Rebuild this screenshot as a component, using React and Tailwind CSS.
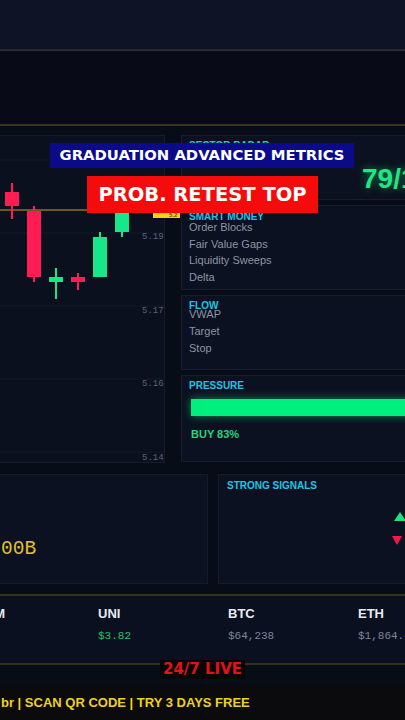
import React from "react";

// candle geometry in chart-local pixels (y grows downward)
const candles = [
  { x: 5, top: 56, bottom: 70, high: 47, low: 83, up: false },
  { x: 27, top: 75, bottom: 141, high: 70, low: 146, up: false },
  { x: 49, top: 141, bottom: 146, high: 132, low: 163, up: true },
  { x: 71, top: 141, bottom: 146, high: 137, low: 154, up: false },
  { x: 93, top: 101, bottom: 141, high: 96, low: 141, up: true },
  { x: 115, top: 62, bottom: 96, high: 55, low: 101, up: true },
];

const priceTicks = [
  { label: "5.19", y: 103 },
  { label: "5.17", y: 177 },
  { label: "5.16", y: 250 },
  { label: "5.14", y: 324 },
];

const tickers = [
  { sym: "ATOM", price: "$8.4", up: true },
  { sym: "UNI", price: "$3.82", up: true },
  { sym: "BTC", price: "$64,238", up: false },
  { sym: "ETH", price: "$1,864.40", up: false },
];

function ChartPanel() {
  return (
    <div className="relative w-[165px] h-[328px] shrink-0 bg-[#0b101e] border-y border-r border-[#151c2b]">
      <svg width="164" height="326" className="block">
        {[24, 97, 170, 243, 316].map((y) => (
          <line key={y} x1="0" x2="164" y1={y} y2={y} stroke="#121929" strokeWidth="1" />
        ))}
        <line x1="0" x2="164" y1="74" y2="74" stroke="#c9a227" strokeWidth="1.2" />
        {candles.map((c) => {
          const color = c.up ? "#18e68a" : "#ff1c52";
          return (
            <g key={c.x}>
              <rect x={c.x + 6} y={c.high} width="2" height={c.low - c.high} fill={color} />
              <rect x={c.x} y={c.top} width="14" height={c.bottom - c.top} fill={color} />
            </g>
          );
        })}
        {priceTicks.map((t) => (
          <text
            key={t.label}
            x="142"
            y={t.y}
            fill="#5a6477"
            fontSize="9"
            fontFamily="Liberation Mono, monospace"
          >
            {t.label}
          </text>
        ))}
      </svg>
      {/* current price tag */}
      <div className="absolute left-[153px] top-[77px] w-[27px] h-[5px] bg-[#f3d512] overflow-hidden">
        <span className="block pl-[16px] text-[6px] leading-[5px] font-bold text-[#5c4d00]">5.2</span>
      </div>
    </div>
  );
}

function Panel({ className, children }) {
  return (
    <div className={`bg-[#0b1120] border border-[#161d2c] shrink-0 ${className}`}>
      {children}
    </div>
  );
}

function Label({ children, className = "" }) {
  return (
    <div className={`text-[10px] leading-[10px] font-bold text-[#1fc4e6] ${className}`}>
      {children}
    </div>
  );
}

export default function App() {
  return (
    <div className="relative w-[405px] h-[720px] overflow-hidden bg-[#080c17] flex flex-col font-['Liberation_Sans',Arial,sans-serif]">
      <div className="h-[51px] shrink-0 bg-[#0e1425] border-b-2 border-[#282d35]" />
      <div className="h-[75px] shrink-0 bg-[#080b17] border-b-2 border-[#37361c]" />

      {/* chart + analytics column */}
      <div className="h-[340px] shrink-0 flex gap-[16px] pt-[9px]">
        <ChartPanel />
        <div className="w-[240px] shrink-0 flex flex-col gap-[5px]">
          <Panel className="h-[65px] pl-[7px] pt-[5px]">
            <Label>SECTOR RADAR</Label>
            <div className="mt-[14px] pl-[173px] text-[28px] leading-[28px] font-bold text-[#1de883] whitespace-nowrap [text-shadow:0_0_8px_rgba(29,232,131,0.55)]">
              79/100
            </div>
          </Panel>

          <Panel className="h-[85px] pl-[7px] pt-[6px]">
            <Label>SMART MONEY</Label>
            <ul className="-mt-[3px] text-[11px] leading-[16.5px] text-[#8b94a7]">
              <li>Order Blocks</li>
              <li>Fair Value Gaps</li>
              <li>Liquidity Sweeps</li>
              <li>Delta</li>
            </ul>
          </Panel>

          <Panel className="h-[75px] pl-[7px] pt-[5px]">
            <Label>FLOW</Label>
            <ul className="-mt-[5px] text-[11px] leading-[17px] text-[#8b94a7]">
              <li>VWAP</li>
              <li>Target</li>
              <li>Stop</li>
            </ul>
          </Panel>

          <Panel className="h-[87px] pl-[7px] pt-[5px]">
            <Label>PRESSURE</Label>
            <div className="ml-[2px] mt-[8px] h-[17px] bg-[#00f07f] shadow-[0_0_9px_rgba(0,240,127,0.55)]" />
            <div className="ml-[2px] mt-[13px] text-[11px] leading-[10px] font-bold text-[#22d67b]">
              BUY 83%
            </div>
          </Panel>
        </div>
      </div>

      {/* volume + signals */}
      <div className="h-[118px] shrink-0 flex gap-[10px] pt-[8px]">
        <div className="w-[208px] h-[110px] shrink-0 bg-[#0b1120] border-y border-r border-[#141b2a] overflow-hidden">
          <div className="-ml-[34px] mt-[64px] text-[19.5px] leading-[20px] text-[#e3c02a] font-['Liberation_Mono',monospace] whitespace-nowrap">
            $4.00B
          </div>
        </div>
        <div className="w-[200px] h-[110px] shrink-0 bg-[#0b1120] border border-[#141b2a] pl-[8px] pt-[6px]">
          <Label>STRONG SIGNALS</Label>
          <div className="mt-[21px] flex flex-col gap-[15px]">
            <svg width="12" height="9" className="ml-[167px] block">
              <polygon points="6,0 12,9 0,9" fill="#1ee27f" />
            </svg>
            <svg width="10" height="9" className="ml-[165px] block">
              <polygon points="0,0 10,0 5,9" fill="#f5164c" />
            </svg>
          </div>
        </div>
      </div>

      {/* price ticker */}
      <div className="mt-[10px] h-[71px] shrink-0 bg-[#0b1020] border-y-2 border-[#34321b] flex -ml-[32px] pt-[10px]">
        {tickers.map((t) => (
          <div key={t.sym} className="w-[130px] shrink-0 whitespace-nowrap">
            <div className="text-[13px] leading-[15px] font-bold text-[#e8ecf2]">{t.sym}</div>
            <div
              className={`mt-[8px] text-[11px] leading-[15px] font-['Liberation_Mono',monospace] ${
                t.sym === "UNI" ? "text-[#27c06a]" : "text-[#7d8696]"
              }`}
            >
              {t.price}
            </div>
          </div>
        ))}
      </div>

      <div className="mt-[20px] h-[35px] shrink-0 bg-[#0b0b0d] flex items-center pl-[1px]">
        <span className="text-[13px] font-bold text-[#f0d01e] whitespace-nowrap">
          br | SCAN QR CODE | TRY 3 DAYS FREE
        </span>
      </div>

      {/* caption overlays */}
      <div className="absolute left-[50px] top-[143px] w-[304px] h-[25px] bg-[#0b0b8a] flex items-center justify-center">
        <span className="text-[14.8px] font-bold text-white font-['DejaVu_Sans',sans-serif] whitespace-nowrap">
          GRADUATION ADVANCED METRICS
        </span>
      </div>
      <div className="absolute left-[87px] top-[176px] w-[231px] h-[37px] bg-[#f50b0b] flex items-center justify-center">
        <span className="text-[19.5px] font-bold text-white font-['DejaVu_Sans',sans-serif] whitespace-nowrap">
          PROB. RETEST TOP
        </span>
      </div>
      <div className="absolute left-[160px] top-[660px] w-[85px] h-[19px] bg-[#070707] flex items-center justify-center">
        <span className="text-[15px] font-bold text-[#e31313] font-['DejaVu_Sans',sans-serif] whitespace-nowrap">
          24/7 LIVE
        </span>
      </div>
    </div>
  );
}
